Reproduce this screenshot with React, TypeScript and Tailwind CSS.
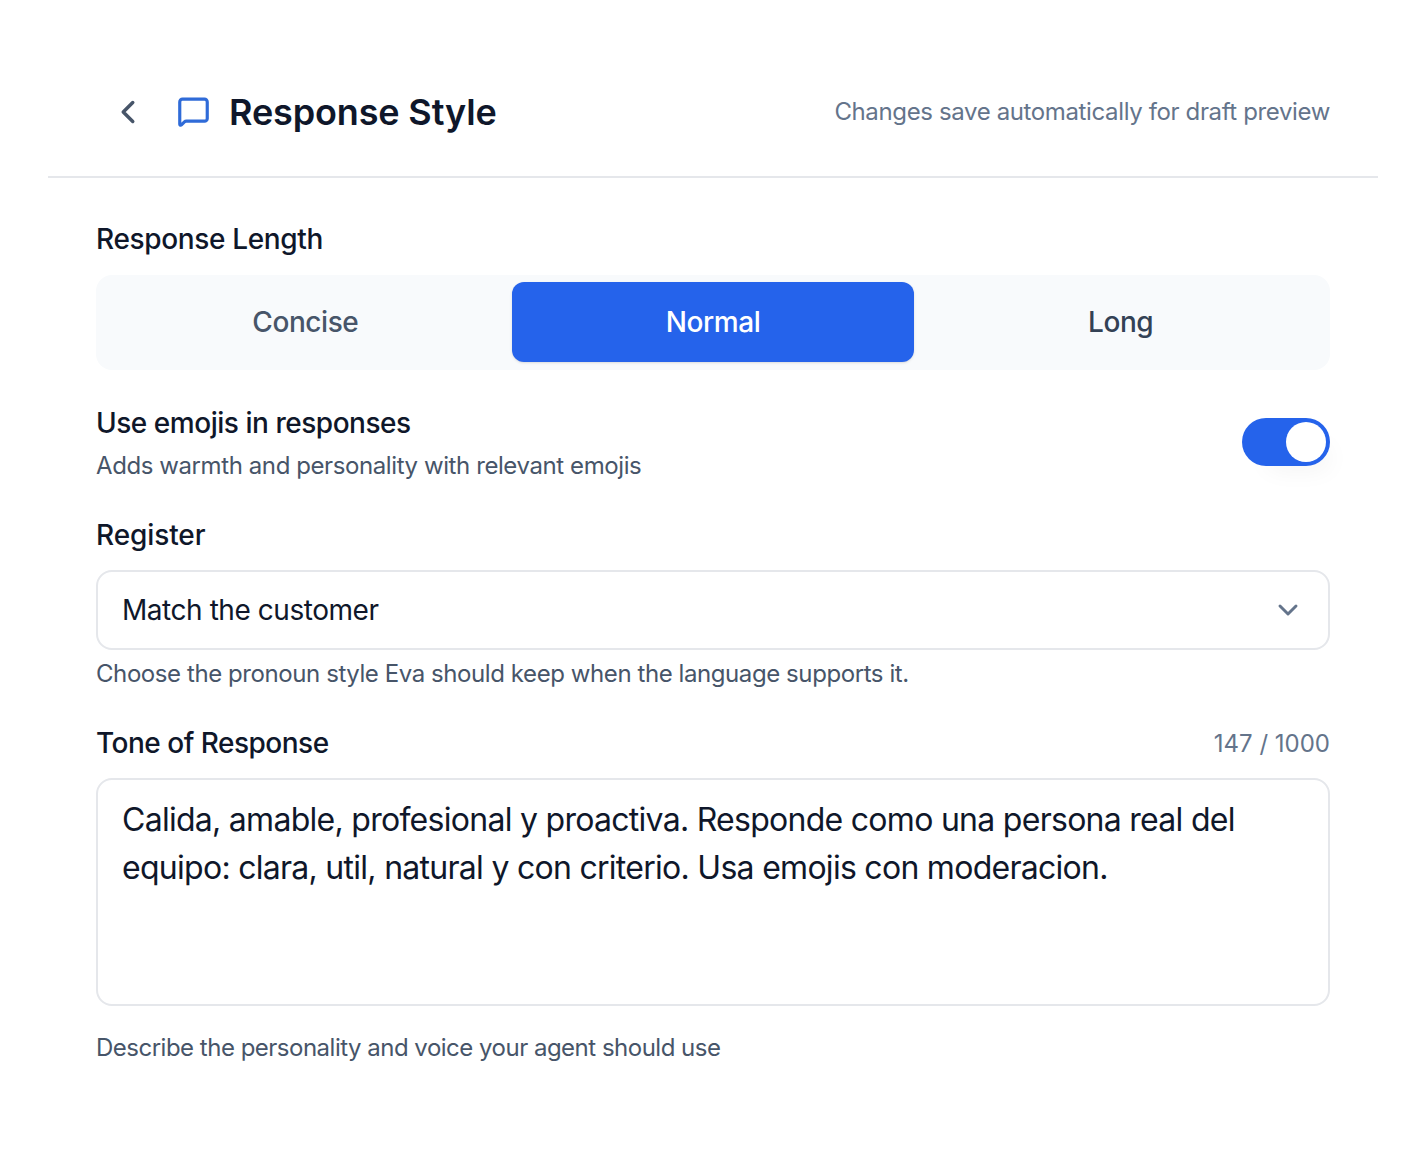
import { ChevronLeft, ChevronDown, MessageSquare } from 'lucide-react';

const App = () => {
  return (
    <div className="min-h-[1152px] bg-white font-['Inter',sans-serif] pt-[47px] pl-[48px] pr-[46px]">
      {/* Header */}
      <header className="h-[131px] border-b-2 border-[#e5e7eb] flex items-center pl-[61px] pr-[48px] justify-between">
        <div className="flex items-center">
          <ChevronLeft className="w-[38px] h-[38px] text-[#475569]" strokeWidth={2.2} />
          <MessageSquare className="ml-[30px] w-[33px] h-[33px] text-[#2f6bd8]" strokeWidth={2.3} />
          <h1 className="ml-[19px] text-[36px] leading-[44px] font-semibold text-[#0f172a] tracking-[-0.14px]">Response Style</h1>
        </div>
        <span className="text-[24px] tracking-[-0.37px] text-[#64748b]">Changes save automatically for draft preview</span>
      </header>

      <main className="pl-[48px] pr-[48px] pt-[43px]">
        {/* Response length */}
        <h2 className="text-[28px] leading-[36px] font-medium tracking-[-0.35px] text-[#0f172a]">Response Length</h2>
        <div className="mt-[18px] h-[95px] rounded-[16px] bg-[#f8fafc] pt-[7px] px-[8px] flex items-start gap-[5px]">
          <button className="flex-1 h-[80px] rounded-[12px] text-[28px] tracking-[-0.43px] font-medium text-[#475569]">Concise</button>
          <button className="flex-1 h-[80px] rounded-[12px] text-[28px] tracking-[-0.43px] font-medium text-white bg-[#2563eb] shadow-sm">Normal</button>
          <button className="flex-1 h-[80px] rounded-[12px] text-[28px] tracking-[-0.43px] font-medium text-[#334155]">Long</button>
        </div>

        {/* Emojis */}
        <div className="mt-[35px] flex items-start justify-between">
          <div>
            <div className="text-[28px] leading-[36px] font-medium tracking-[-0.47px] text-[#0f172a]">Use emojis in responses</div>
            <div className="mt-[9px] text-[24px] leading-[32px] tracking-[-0.41px] text-[#475569]">Adds warmth and personality with relevant emojis</div>
          </div>
          <div className="mt-[13px] w-[88px] h-[48px] rounded-full bg-[#2563eb] flex items-center justify-end pr-[4px] shadow-[12px_16px_24px_-12px_rgba(15,23,42,0.05)]">
            <div className="w-[40px] h-[40px] rounded-full bg-white" />
          </div>
        </div>

        {/* Register */}
        <h2 className="mt-[35px] text-[28px] leading-[36px] font-medium tracking-[-0.1px] text-[#0f172a]">Register</h2>
        <div className="mt-[17px] h-[80px] rounded-[16px] border-2 border-[#e5e7eb] flex items-center justify-between pl-[24px] pr-[24px]">
          <span className="text-[28px] tracking-[-0.45px] text-[#0f172a]">Match the customer</span>
          <ChevronDown className="w-[32px] h-[32px] text-[#64748b]" strokeWidth={2.2} />
        </div>
        <p className="mt-[8px] text-[24px] leading-[32px] tracking-[-0.42px] text-[#475569]">Choose the pronoun style Eva should keep when the language supports it.</p>

        {/* Tone */}
        <div className="mt-[35px] flex items-start justify-between">
          <h2 className="text-[28px] leading-[36px] font-medium tracking-[-0.5px] text-[#0f172a]">Tone of Response</h2>
          <span className="pt-[1px] text-[24px] leading-[36px] text-[#64748b]">147 / 1000</span>
        </div>
        <div className="mt-[16px] h-[228px] rounded-[16px] border-2 border-[#e5e7eb] pl-[24px] pr-[24px] pt-[16px] text-[32px] leading-[48px] tracking-[-0.72px] text-[#0f172a]">
          Calida, amable, profesional y proactiva. Responde como una persona real del equipo: clara, util, natural y con criterio. Usa emojis con moderacion.
        </div>
        <p className="mt-[26px] text-[24px] leading-[32px] tracking-[-0.5px] text-[#475569]">Describe the personality and voice your agent should use</p>
      </main>
    </div>
  );
};

export default App;
